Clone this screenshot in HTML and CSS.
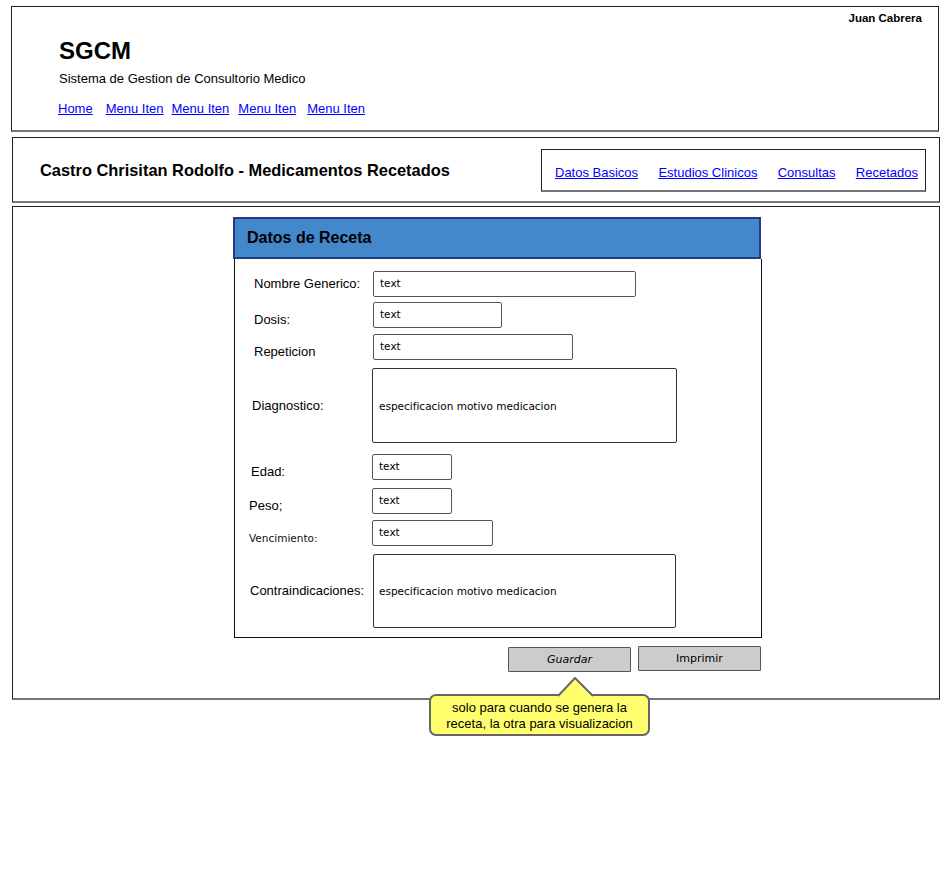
FILE: index.html
```html
<!DOCTYPE html>
<html lang="es">
<head>
<meta charset="utf-8">
<title>SGCM - Medicamentos Recetados</title>
<link rel="stylesheet" href="styles.css">
</head>
<body>
<div class="page">
  <header class="box header">
    <div class="user">Juan Cabrera</div>
    <div class="brand">SGCM</div>
    <div class="subtitle">Sistema de Gestion de Consultorio Medico</div>
    <nav class="menu">
      <a href="#" class="m-home">Home</a>
      <a href="#" class="m1">Menu Iten</a>
      <a href="#" class="m2">Menu Iten</a>
      <a href="#" class="m3">Menu Iten</a>
      <a href="#" class="m4">Menu Iten</a>
    </nav>
  </header>

  <section class="box patient">
    <h1 class="patient-title">Castro Chrisitan Rodolfo - Medicamentos Recetados</h1>
    <nav class="tabs">
      <a href="#">Datos Basicos</a>
      <a href="#">Estudios Clinicos</a>
      <a href="#">Consultas</a>
      <a href="#">Recetados</a>
    </nav>
  </section>

  <main class="box content">
    <div class="panel">
      <div class="panel-head">Datos de Receta</div>
      <div class="panel-body">
        <div class="row r1">
          <span class="lbl">Nombre Generico:</span>
          <div class="field w263">text</div>
        </div>
        <div class="row r2">
          <span class="lbl">Dosis:</span>
          <div class="field w129">text</div>
        </div>
        <div class="row r3">
          <span class="lbl">Repeticion</span>
          <div class="field w200">text</div>
        </div>
        <div class="row r4 tall">
          <span class="lbl lbl-l2">Diagnostico:</span>
          <div class="area w304">especificacion motivo medicacion</div>
        </div>
        <div class="row r5">
          <span class="lbl lbl-l3">Edad:</span>
          <div class="field w80">text</div>
        </div>
        <div class="row r6">
          <span class="lbl lbl-l5">Peso;</span>
          <div class="field w80">text</div>
        </div>
        <div class="row r7">
          <span class="lbl lbl-l5 hand">Vencimiento:</span>
          <div class="field w121">text</div>
        </div>
        <div class="row r8 tall">
          <span class="lbl lbl-l4">Contraindicaciones:</span>
          <div class="area w303">especificacion motivo medicacion</div>
        </div>
      </div>
      <div class="actions">
        <div class="btn btn-save">Guardar
          <div class="callout">
            <svg class="callout-tip" width="38" height="21" viewBox="0 0 38 21">
              <path d="M1 20 L18 2 L36 20" fill="#ffff6e" stroke="#666" stroke-width="2" stroke-linejoin="round"/>
            </svg>
            <div class="callout-text">solo para cuando se genera la<br>receta, la otra para visualizacion</div>
          </div>
        </div>
        <div class="btn btn-print">Imprimir</div>
      </div>
    </div>
  </main>
</div>
</body>
</html>
```

FILE: styles.css
```css
* { box-sizing: border-box; }

html, body {
  margin: 0;
  padding: 0;
  background: #ffffff;
}

body {
  font-family: "Liberation Sans", Arial, sans-serif;
  color: #000;
  width: 944px;
  height: 895px;
  overflow: hidden;
}

.page {
  padding: 6px 0 0 11px;
  display: flex;
  flex-direction: column;
}

.box {
  border: 1px solid #222;
  border-bottom: 2px solid #777;
  background: #fff;
}

a {
  color: #0000ff;
  text-decoration: underline;
}

/* ---------- Header ---------- */
.header {
  width: 928px;
  height: 126px;
  padding: 5px 0 0 47px;
  display: flex;
  flex-direction: column;
}

.user {
  align-self: flex-end;
  margin-right: 16px;
  font-size: 11.5px;
  font-weight: bold;
  line-height: 13px;
}

.brand {
  margin-top: 12px;
  font-size: 24px;
  font-weight: bold;
  line-height: 28px;
}

.subtitle {
  margin-top: 6px;
  font-size: 13px;
  line-height: 16px;
}

.menu {
  margin-top: 14px;
  font-size: 13px;
  line-height: 16px;
  display: flex;
  margin-left: -1px;
}
.menu a { display: block; }
.menu .m1 { margin-left: 13px; }
.menu .m2 { margin-left: 8px; }
.menu .m3 { margin-left: 9px; }
.menu .m4 { margin-left: 11px; }

/* ---------- Patient bar ---------- */
.patient {
  margin-top: 5px;
  margin-left: 1px;
  width: 928px;
  height: 66px;
  padding: 1px 13px 0 27px;
  display: flex;
  align-items: center;
  justify-content: space-between;
}

.patient-title {
  margin: 0;
  font-size: 16.4px;
  font-weight: bold;
  line-height: 20px;
}

.tabs {
  width: 385px;
  height: 43px;
  border: 1px solid #222;
  border-bottom: 2px solid #777;
  padding: 5px 0 0 13px;
  display: flex;
  align-items: center;
  gap: 20.3px;
  font-size: 13px;
  margin-top: 0;
}

/* ---------- Content ---------- */
.content {
  margin-top: 3px;
  margin-left: 1px;
  width: 928px;
  height: 494px;
  padding: 10px 0 0 220px;
  position: relative;
}

.panel {
  width: 529px;
  display: flex;
  flex-direction: column;
}

.panel-head {
  height: 42px;
  background: #4488cc;
  border: 2px solid #1f3d87;
  padding-left: 12px;
  display: flex;
  align-items: center;
  font-size: 16px;
  font-weight: bold;
  line-height: 20px;
  margin-right: 1px;
}

.panel-body {
  margin-left: 1px;
  height: 379px;
  border: 1px solid #111;
  border-top: none;
  padding-top: 12px;
  display: flex;
  flex-direction: column;
}

.row {
  display: grid;
  grid-template-columns: 138px auto;
  align-items: end;
  justify-content: start;
}
.row.tall, .row.r1 { align-items: center; }

.r2 { margin-top: 5px; }
.r3 { margin-top: 6px; }
.r4 { margin-top: 8px; }
.r5 { margin-top: 11px; }
.r6 { margin-top: 8px; }
.r7 { margin-top: 6px; }
.r8 { margin-top: 8px; }

.lbl {
  padding-left: 19px;
  font-size: 13px;
  line-height: 16px;
  white-space: nowrap;
}
.lbl-l2 { padding-left: 17px; }
.lbl-l3 { padding-left: 16px; }
.lbl-l4 { padding-left: 15px; }
.lbl-l5 { padding-left: 14px; }
.lbl.hand {
  font-family: "DejaVu Sans", sans-serif;
  font-size: 10.5px;
  line-height: 14px;
  padding-bottom: 1px;
  color: #111;
}

.field, .area {
  font-family: "DejaVu Sans", sans-serif;
  font-size: 10.5px;
  color: #000;
  background: #fff;
  border: 1.5px solid #555;
  border-radius: 2px;
  padding-left: 6px;
  display: flex;
  align-items: center;
}
.field {
  height: 26px;
  padding-bottom: 2px;
}
.area {
  height: 75px;
  border-color: #333;
}
.r4 .area { margin-left: -1px; }
.r5 .field, .r6 .field, .r7 .field { margin-left: -1px; }
.r8 .area { height: 74px; padding-left: 5px; }

.w263 { width: 263px; }
.w129 { width: 129px; }
.w200 { width: 200px; }
.w304 { width: 305px; }
.w303 { width: 303px; }
.w80 { width: 80px; }
.w121 { width: 121px; }

/* ---------- Buttons ---------- */
.actions {
  margin-top: 8px;
  display: flex;
  justify-content: flex-end;
  align-items: flex-start;
  gap: 7px;
  padding-right: 1px;
}

.btn {
  width: 123px;
  height: 25px;
  background: #cccccc;
  border: 1.5px solid #555;
  border-radius: 1px;
  font-family: "DejaVu Sans", sans-serif;
  font-size: 11px;
  display: flex;
  align-items: center;
  justify-content: center;
  padding-bottom: 1px;
}
.btn-save { margin-top: 1px; position: relative; font-style: italic; }

/* ---------- Callout ---------- */
.callout {
  position: absolute;
  left: -80px;
  top: 46px;
  width: 221px;
  height: 42px;
  background: #ffff6e;
  border: 2px solid #666;
  border-radius: 7px;
  font-family: "Liberation Sans", Arial, sans-serif;
  font-style: normal;
  font-size: 13px;
  line-height: 16px;
  text-align: center;
  display: flex;
  align-items: center;
  justify-content: center;
  z-index: 2;
}

.callout-tip {
  position: absolute;
  left: 126px;
  top: -20px;
  display: block;
}

.callout-text {
  position: relative;
  padding-top: 1px;
}
```
